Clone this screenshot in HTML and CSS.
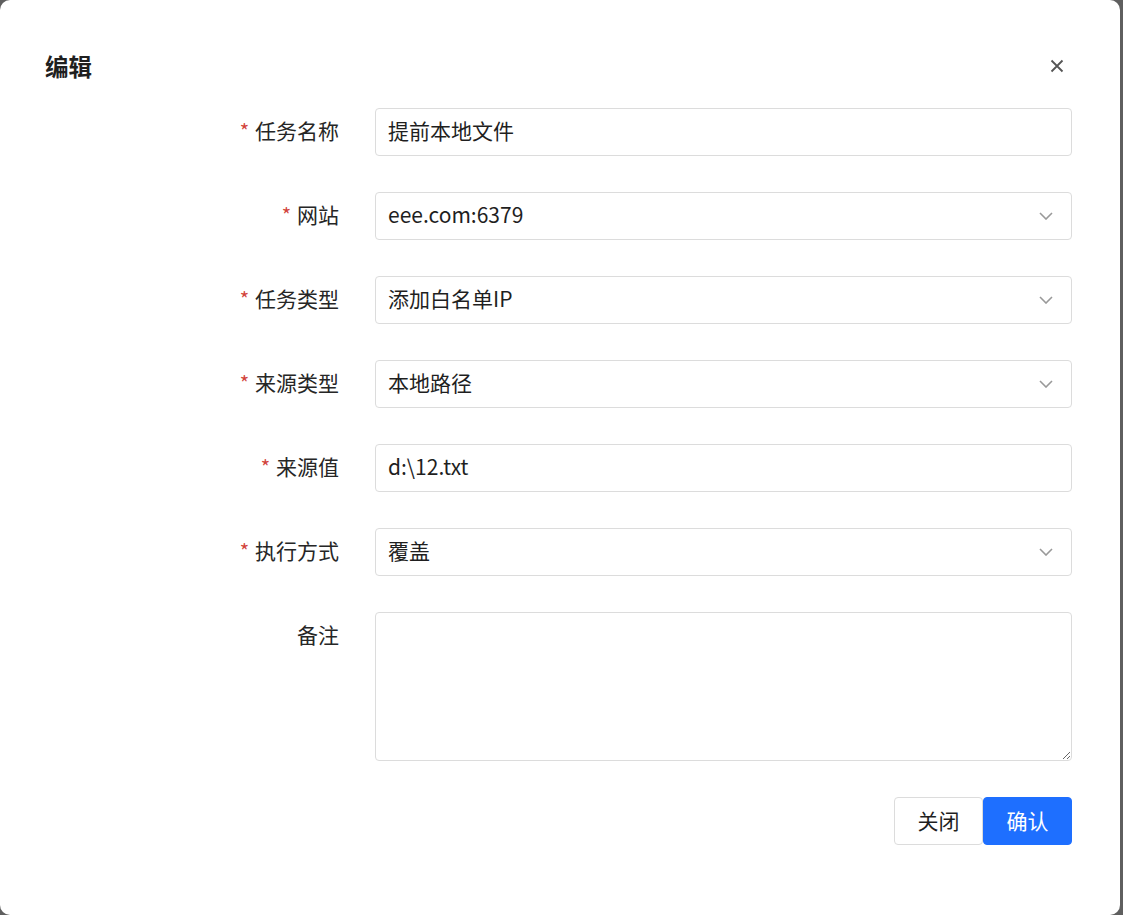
FILE: index.html
```html
<!DOCTYPE html>
<html lang="zh-CN">
<head>
<meta charset="utf-8">
<link rel="stylesheet" href="styles.css">
</head>
<body>
<div class="dialog">
  <div class="header">
    <h2 class="title">编辑</h2>
    <button class="close" aria-label="close">
      <svg width="14" height="14" viewBox="0 0 14 14"><path d="M1.5 1.5 L12.5 12.5 M12.5 1.5 L1.5 12.5" stroke="#555" stroke-width="1.8" fill="none"/></svg>
    </button>
  </div>
  <form class="form">
    <label class="label"><span class="req">*</span>任务名称</label>
    <div class="field"><input class="input" value="提前本地文件"></div>

    <label class="label"><span class="req">*</span>网站</label>
    <div class="field select"><span class="val">eee.com:6379</span><svg class="chev" width="14" height="8" viewBox="0 0 14 8"><path d="M1 1 L7 7 L13 1" stroke="#999" stroke-width="1.6" fill="none"/></svg></div>

    <label class="label"><span class="req">*</span>任务类型</label>
    <div class="field select"><span class="val">添加白名单IP</span><svg class="chev" width="14" height="8" viewBox="0 0 14 8"><path d="M1 1 L7 7 L13 1" stroke="#999" stroke-width="1.6" fill="none"/></svg></div>

    <label class="label"><span class="req">*</span>来源类型</label>
    <div class="field select"><span class="val">本地路径</span><svg class="chev" width="14" height="8" viewBox="0 0 14 8"><path d="M1 1 L7 7 L13 1" stroke="#999" stroke-width="1.6" fill="none"/></svg></div>

    <label class="label"><span class="req">*</span>来源值</label>
    <div class="field"><input class="input" value="d:\12.txt"></div>

    <label class="label"><span class="req">*</span>执行方式</label>
    <div class="field select"><span class="val">覆盖</span><svg class="chev" width="14" height="8" viewBox="0 0 14 8"><path d="M1 1 L7 7 L13 1" stroke="#999" stroke-width="1.6" fill="none"/></svg></div>

    <label class="label">备注</label>
    <div class="field-area"><textarea class="textarea"></textarea></div>

    <div></div>
    <div class="actions">
      <button type="button" class="btn btn-default">关闭</button>
      <button type="button" class="btn btn-primary">确认</button>
    </div>
  </form>
</div>
</body>
</html>
```
FILE: styles.css
```css
html, body {
  margin: 0;
  padding: 0;
  background: #5f5f5f;
  width: 1123px;
  height: 915px;
  overflow: hidden;
  font-family: "Noto Sans CJK SC", "Noto Sans", sans-serif;
}
.dialog {
  width: 1120px;
  height: 915px;
  background: #fff;
  border-radius: 10px;
  box-sizing: border-box;
}
.header {
  display: flex;
  align-items: center;
  justify-content: space-between;
  padding: 48px 56px 0 45px;
  height: 36px;
}
.title {
  margin: 0;
  font-size: 23.5px;
  font-weight: 700;
  color: #1f1f1f;
  line-height: 36px;
}
.close {
  border: 0;
  background: none;
  padding: 0;
  width: 14px;
  height: 14px;
  display: flex;
}
.form {
  margin-top: 24px;
  display: grid;
  grid-template-columns: 339px 697px;
  column-gap: 36px;
  row-gap: 36px;
}
.label {
  font-size: 21px;
  color: #262626;
  text-align: right;
  line-height: 44px;
  height: 48px;
}
.req {
  color: #d2443b;
  margin-right: 6px;
  font-size: 20px;
}
.field {
  height: 48px;
  border: 1px solid #dcdcdc;
  border-radius: 4px;
  box-sizing: border-box;
  display: flex;
  align-items: center;
}
.input {
  border: 0;
  outline: 0;
  width: 100%;
  height: 100%;
  padding: 0 12px 4px;
  font-family: inherit;
  font-size: 21px;
  color: #1f1f1f;
  background: transparent;
  box-sizing: border-box;
}
.select {
  justify-content: space-between;
  padding: 0 18px 0 12px;
}
.val {
  font-size: 21px;
  color: #1f1f1f;
  margin-top: -4px;
}
.chev {
  display: block;
}
.field-area {
  height: 149px;
}
.textarea {
  width: 100%;
  height: 149px;
  border: 1px solid #dcdcdc;
  border-radius: 4px;
  box-sizing: border-box;
  outline: 0;
  font-family: inherit;
  font-size: 21px;
  padding: 8px 12px;
  resize: vertical;
}
.actions {
  display: flex;
  justify-content: flex-end;
}
.btn {
  width: 89px;
  height: 48px;
  font-family: inherit;
  font-size: 21px;
  border-radius: 4px;
  box-sizing: border-box;
  padding: 0 0 3px;
}
.btn-default {
  background: #fff;
  border: 1px solid #dcdcdc;
  color: #1f1f1f;
}
.btn-primary {
  background: #1e6fff;
  border: 1px solid #1e6fff;
  color: #fff;
}
```
